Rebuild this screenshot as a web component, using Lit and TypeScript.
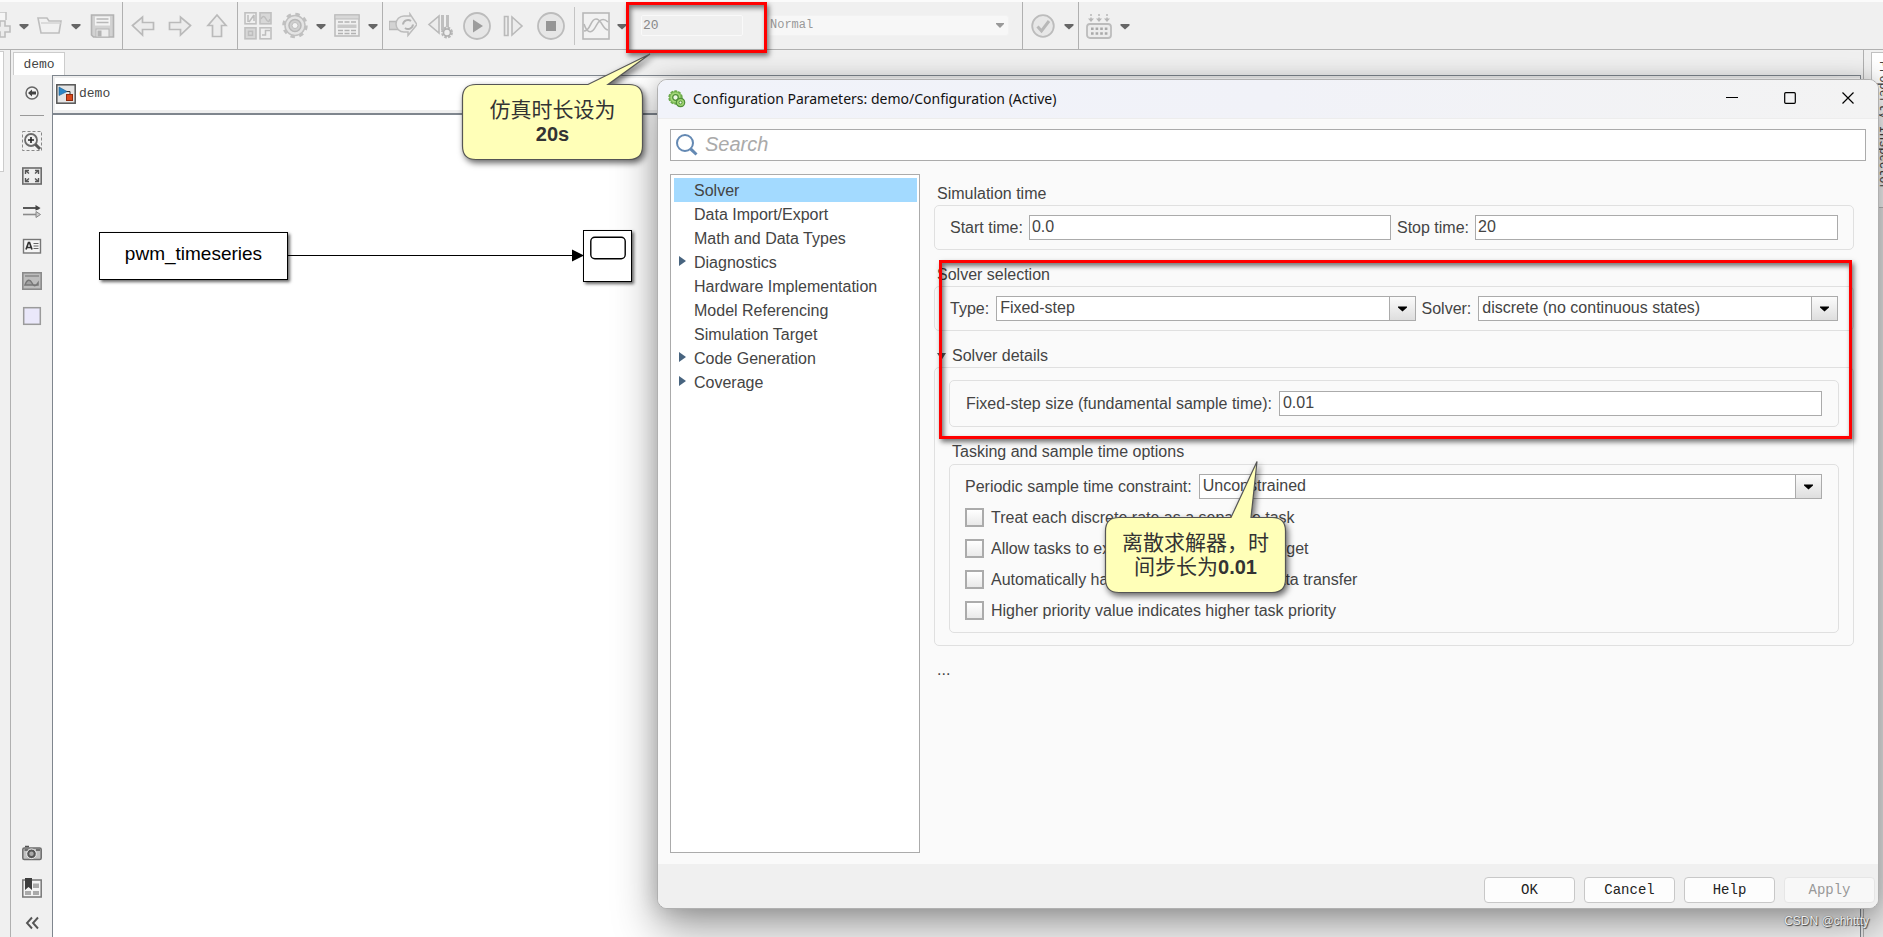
import { LitElement, html, css, svg, nothing } from "lit";
import { customElement, property } from "lit/decorators.js";

type Art = ReturnType<typeof svg>;

const icons: Record<string, Art> = {
  add: svg`<path d="M-8 14V0H6v8" fill="#f6f6f6" stroke="#c4c4c4" stroke-width="1.6"/><path d="M-3 14h5V9h5v5h5v6H7v5H2v-5h-5z" transform="translate(-2 0)" fill="#ececec" stroke="#bdbdbd" stroke-width="1.6"/>`,
  folder: svg`<path d="M2 6h9l2 3h12l-2 12H5z" fill="#f1f1f1" stroke="#bebebe" stroke-width="1.6"/><path d="M5 11h20" stroke="#d2d2d2" stroke-width="1.4"/>`,
  save: svg`<path d="M3.500 3h22v22h-20l-2-2z" fill="#d2d2d2" stroke="#b2b2b2" stroke-width="1.6"/><rect x="7" y="4.500" width="15" height="9" fill="#f3f3f3"/><path d="M8.500 7h12M8.500 10.500h12" stroke="#b8b8b8" stroke-width="1.3"/><rect x="8" y="17" width="13" height="8" fill="#ededed" stroke="#b5b5b5"/><rect x="9.500" y="18.500" width="4" height="6" fill="#b4b4b4"/>`,
  back: svg`<path d="M3.500 13.500L13.500 5v5.500h11v7h-11V23z" fill="#ececec" stroke="#bababa" stroke-width="1.7"/>`,
  forward: svg`<path d="M24.500 13.500L14.500 5v5.500h-11v7h11V23z" fill="#ececec" stroke="#bababa" stroke-width="1.7"/>`,
  up: svg`<path d="M14 3L5 13.500h4.500V24.500h9V13.500H23z" fill="#ececec" stroke="#bababa" stroke-width="1.7"/>`,
  library: svg`<g fill="#efefef" stroke="#c0c0c0" stroke-width="1.6"><rect x="1" y=".8" width="11" height="11"/><rect x="16" y=".8" width="11" height="11" fill="#d7d7d7"/><rect x="1" y="15.800" width="11" height="11" fill="#d7d7d7"/><rect x="16" y="15.800" width="11" height="11"/></g><g fill="none" stroke="#bdbdbd" stroke-width="1.5"><path d="M4 10V3M5 10l5-7M10 9V3M17 7q2.500-5 5 0t4 0M18 23h3.500v-4.500H26"/><rect x="4.500" y="19.300" width="4" height="4"/></g>`,
  gear: svg`<circle cx="14" cy="13.500" r="11" fill="none" stroke="#c0c0c0" stroke-width="3.500" stroke-dasharray="4.320 4.320"/><circle cx="14" cy="13.500" r="10" fill="#e4e4e4" stroke="#c0c0c0" stroke-width="1.5"/><circle cx="14" cy="13.500" r="6" fill="#d0d0d0" stroke="#b8b8b8" stroke-width="1.5"/><circle cx="14" cy="13.500" r="3" fill="#f3f3f3" stroke="#bdbdbd"/>`,
  table: svg`<rect x="2" y="3" width="24" height="21" fill="#f0f0f0" stroke="#bdbdbd" stroke-width="1.6"/><rect x="2" y="3" width="24" height="4" fill="#d8d8d8" stroke="#bdbdbd"/><rect x="4.500" y="12.500" width="19" height="3.500" fill="#c9c9c9"/><path d="M5 10h18M5 18.500h18M5 21.500h18" stroke="#b2b2b2" stroke-width="1.4" stroke-dasharray="5 1.500"/>`,
  update: svg`<path d="M0 9.500h10v8H0z" fill="#d3d3d3" stroke="#b8b8b8" stroke-width="1.5"/><path d="M15 4h6V2l7 10.500-9 11V20h-4a8 8 0 0 1 0-16z" fill="#ebebeb" stroke="#bcbcbc" stroke-width="1.5"/><path d="M14 12.500a5 5 0 0 1 8-3.500M24 12.500a5 5 0 0 1-8 3.500" fill="none" stroke="#b2b2b2" stroke-width="2"/>`,
  stepback: svg`<path d="M13 4v17L3 12.500z" fill="#ececec" stroke="#bababa" stroke-width="1.6"/><path d="M16.500 3v15M21.500 3v12" stroke="#bfbfbf" stroke-width="3"/><circle cx="21" cy="20.500" r="4.800" fill="none" stroke="#b8b8b8" stroke-width="2.400" stroke-dasharray="2.500 1.270"/><circle cx="21" cy="20.500" r="3.500" fill="#eee" stroke="#b0b0b0" stroke-width="1.6"/>`,
  play: svg`<circle cx="14" cy="14" r="13" fill="#e6e6e6" stroke="#bcbcbc" stroke-width="1.8"/><path d="M10 7.500v13L20 14z" fill="#9c9c9c"/>`,
  stepfwd: svg`<path d="M4.500 4.500h3.500v19H4.500zM12 5v18l10-9z" fill="#ececec" stroke="#bababa" stroke-width="1.6"/>`,
  stop: svg`<circle cx="14" cy="14" r="13" fill="#e6e6e6" stroke="#bcbcbc" stroke-width="1.8"/><rect x="9" y="9" width="10" height="10" fill="#969696"/>`,
  scope: svg`<rect x="1" y="1" width="26" height="26" fill="#f2f2f2" stroke="#b8b8b8" stroke-width="1.6"/><path d="M2 19c7 0 6-12 12-12s6 10 12 11M2 12c4 12 9 8 12 2s7-9 12-4" fill="none" stroke="#b8b8b8" stroke-width="1.6"/>`,
  check: svg`<circle cx="14" cy="14" r="10.800" fill="#e7e7e7" stroke="#bcbcbc" stroke-width="1.8"/><path d="M8.500 14.500l4 4.500L20 9" fill="none" stroke="#b8b8b8" stroke-width="3"/>`,
  build: svg`<path d="M6 2v6M14 2v6M22 2v6" stroke="#bcbcbc" stroke-width="1.6" stroke-dasharray="2 1.500"/><path d="M3 6.500h6L6 10zM11 6.500h6L14 10zM19 6.500h6L22 10z" fill="#b6b6b6"/><rect x="2" y="12" width="24" height="14" rx="3" fill="#ececec" stroke="#bcbcbc" stroke-width="1.8"/><path d="M6 16.800h17M6 21.500h17" stroke="#a9a9a9" stroke-width="2.400" stroke-dasharray="2.600 2"/>`,
  hide: svg`<circle cx="10" cy="10" r="6" fill="#f5f5f5" stroke="#666" stroke-width="1.5"/><path d="M6 10l4-3.500v2h4v3h-4v2z" fill="#444"/>`,
  zoom: svg`<rect x=".5" y=".5" width="19" height="19" fill="none" stroke="#888" stroke-dasharray="3 2"/><circle cx="9" cy="9" r="6" fill="#efefef" stroke="#6b6b6b" stroke-width="1.8"/><path d="M6 9h6M9 6v6" stroke="#222" stroke-width="1.6"/><path d="M13.500 13.500l4.500 4.500" stroke="#555" stroke-width="3"/>`,
  fit: svg`<rect x=".8" y="2" width="18.400" height="16" fill="#eee" stroke="#6c6c6c" stroke-width="1.6"/><path d="M3.500 8V4.500H7M13 4.500h3.500V8M16.500 12v3.500H13M7 15.500H3.500V12M3.500 4.500L7 7.500M16.500 4.500L13 7.500M16.500 15.500L13 12.500M3.500 15.500l3.500-3" fill="none" stroke="#555" stroke-width="1.4"/>`,
  signals: svg`<path d="M1 7h13" stroke="#333" stroke-width="1.6"/><path d="M13.500 4l5 3-2 1.500-3 1z" fill="#444"/><path d="M1 13.500h13" stroke="#8a8a8a" stroke-width="1.6"/><path d="M14 10.500l4.500 3-4.500 3z" fill="#ccc" stroke="#888"/>`,
  annotation: svg`<rect x="1.500" y="3.500" width="17" height="13.500" fill="#f5f5f5" stroke="#777" stroke-width="1.4"/><path d="M4 13.500L6.500 6.500h1l2.500 7M5 11.500h4" fill="none" stroke="#333" stroke-width="1.7"/><path d="M11.500 7.500h5M11.500 10h5M11.500 12.500h5" stroke="#666" stroke-width="1"/>`,
  image: svg`<rect x=".8" y="1.800" width="18.400" height="16.400" fill="#bdbdbd" stroke="#8b8b8b" stroke-width="1.6"/><path d="M3 5h14" stroke="#8a8a8a" stroke-width="1.500"/><path d="M3 14c2-6 5-6 7-2s4 3 6 0v2H3z" fill="#a2a2a2" stroke="#777" stroke-width="1.5"/>`,
  area: svg`<rect x="1.700" y="1.700" width="16.600" height="16.600" fill="#eae8fa" stroke="#9b9b9b" stroke-width="1.500"/>`,
  camera: svg`<rect x=".8" y="5" width="18.400" height="11.500" rx="1.500" fill="#c2c2c2" stroke="#6c6c6c" stroke-width="1.5"/><path d="M3 3.500h4M2.500 7h4M14 7h4" stroke="#555" stroke-width="1.6"/><circle cx="9.500" cy="10.800" r="4.800" fill="#555" stroke="#eee" stroke-width="1"/><circle cx="9.500" cy="10.800" r="2.200" fill="#aaa"/>`,
  browser: svg`<rect x=".8" y="2" width="18.400" height="17" fill="#f3f3f3" stroke="#777" stroke-width="1.5"/><path d="M3 13h6v4H3zM11 13h6v4h-6zM11 5.500h6v4.500h-6z" fill="#aaa"/><path d="M3 0h7v12L6.500 9 3 12z" fill="#3d3d3d"/>`,
  collapse: svg`<path d="M10 4.500L5 10l5 5.500M16 4.500L11 10l5 5.500" fill="none" stroke="#555" stroke-width="1.9"/>`,
};

const glyph = (name: string, size = 28) =>
  html`<svg width=${size} height=${size} viewBox="0 0 ${size} ${size}" aria-hidden="true">${icons[name]}</svg>`;

@customElement("tool-button")
class ToolButton extends LitElement {
  static styles = css`
    :host { display: block; flex: none; }
    button { display: block; padding: 0; border: 0; background: none; overflow: hidden; }
    .caret { width: 14px; height: 28px; }
    .clipped { width: 12px; }
    svg { display: block; }
  `;
  @property() icon = "";
  @property() label = "";
  render() {
    if (this.icon === "caret")
      return html`<button class="caret" aria-label=${this.label || "More"}>
        <svg width="14" height="28" viewBox="0 0 14 28"><path d="M2.500 12h9v1.500L7 17.500l-4.500-4z" fill="#666"/></svg>
      </button>`;
    return html`<button class=${this.icon === "add" ? "clipped" : ""} aria-label=${this.label}>${glyph(this.icon)}</button>`;
  }
}

@customElement("note-callout")
class NoteCallout extends LitElement {
  static styles = css`
    :host { display: block; width: 181px; height: 76px; position: relative; pointer-events: none; }
    svg { position: absolute; left: 0; top: 0; overflow: visible; filter: drop-shadow(2px 3px 3px rgba(0, 0, 0, 0.6)); }
    .text {
      position: relative; height: 100%; display: flex; flex-direction: column; align-items: center; justify-content: center;
      font-family: "Liberation Sans", "Noto Sans CJK SC", sans-serif; font-size: 21px; line-height: 24px; color: #333;
    }
    .text ::slotted(*) { white-space: nowrap; }
  `;
  @property() tail = "";
  render() {
    return html`<svg width="181" height="76" aria-hidden="true">
        <path d=${this.tail} fill="#ffffb8" stroke="#555" stroke-width="1.2" />
      </svg>
      <div class="text"><slot></slot></div>`;
  }
}

@customElement("combo-box")
class ComboBox extends LitElement {
  static styles = css`
    :host { display: block; min-width: 0; }
    label { display: flex; align-items: center; }
    .name { white-space: nowrap; margin-right: 7px; }
    .box { flex: 1; display: grid; grid-template-columns: 1fr 27px; height: 25px; box-sizing: border-box; min-width: 0; }
    select {
      grid-area: 1 / 1 / 2 / 3; appearance: none; border: 1px solid #ababab; border-radius: 0; background: #fff;
      font: inherit; color: inherit; padding: 0 30px 1px 3px; min-width: 0; height: 25px;
    }
    .drop {
      grid-area: 1 / 2; pointer-events: none; border: 1px solid #ababab;
      background: linear-gradient(#fbfbfb, #dedede); display: grid; place-items: center;
    }
  `;
  @property() label = "";
  @property() value = "";
  render() {
    return html`<label>
      <span class="name">${this.label}</span>
      <span class="box">
        <select><option>${this.value}</option></select>
        <span class="drop"><svg width="9" height="6"><path d="M0 .5h9v1L4.500 5.500 0 1.500z" fill="#000"/></svg></span>
      </span>
    </label>`;
  }
}

@customElement("config-dialog")
class ConfigDialog extends LitElement {
  static styles = css`
    :host {
      display: flex; flex-direction: column; box-sizing: border-box; border: 1px solid #b0b0b0; border-radius: 10px;
      background: #fafafa; color: #444; font-family: "Liberation Sans", Arial, sans-serif; font-size: 16px; line-height: 20px;
      box-shadow: 0 0 20px rgba(0, 0, 0, 0.16), 0 20px 44px rgba(0, 0, 0, 0.38);
    }
    .title {
      display: flex; align-items: center; height: 38px; padding: 0 1px 0 10px; border-radius: 9px 9px 0 0; border-bottom: 1px solid #ededed;
      background: linear-gradient(90deg, #f1f3fa, #f1f2f8 50%, #f3f3f3);
      font-family: "Noto Sans", sans-serif; font-size: 14px; color: #111;
    }
    .title h1 { flex: 1; margin: 0 0 0 7px; font: inherit; }
    .title button { width: 58px; height: 38px; border: 0; padding: 0; background: none; }
    .body { flex: 1; min-height: 0; display: flex; flex-direction: column; gap: 13px; padding: 10px 12px 11px; }
    .search { display: flex; align-items: center; height: 32px; box-sizing: border-box; border: 1px solid #ababab; background: #fff; padding-left: 4px; }
    .search input { flex: 1; border: 0; outline: 0; background: none; font: italic 20px/26px "Liberation Sans", sans-serif; padding: 0 0 2px 6px; }
    .search input::placeholder { color: #aaa; opacity: 1; }
    .panes { flex: 1; min-height: 0; display: flex; gap: 14px; }
    .tree { width: 250px; box-sizing: border-box; border: 1px solid #ababab; background: #fff; margin: 0; padding: 3px 2px 0 3px; list-style: none; }
    .tree button {
      display: flex; align-items: center; width: 100%; height: 24px; border: 0; padding: 2px 0 0; background: none;
      font: inherit; color: inherit; text-align: left;
    }
    .tree .selected { background: #a3daff; }
    .tree .mark { width: 20px; box-sizing: border-box; display: grid; place-items: center start; }
    .tree .mark svg { margin-left: 5px; margin-bottom: 4px; }
    .form { flex: 1; min-width: 0; padding: 10px 12px 0 0; }
    h2 { margin: 0 0 1px 3px; font: inherit; }
    .group { border: 1px solid #e0e0e0; border-radius: 5px; box-sizing: border-box; }
    .row { display: flex; gap: 6px; padding: 9px 15px; }
    .row > * { flex: 1; }
    .combos { display: grid; grid-template-columns: 19fr 17fr; }
    .field { display: flex; align-items: center; white-space: nowrap; min-width: 0; }
    .field input {
      flex: 1; min-width: 0; margin-left: 6px; height: 25px; box-sizing: border-box; border: 1px solid #ababab;
      background: #fff; font: inherit; color: inherit; padding: 0 2px 1px;
    }
    .details > h2 { display: flex; align-items: center; }
    .details > h2 svg { margin-right: 6px; }
    .selection, .simulation { margin-bottom: 15px; }
    .solver { position: relative; }
    .outer { padding: 12px 14px; }
    .outer .row { padding: 10px 16px; }
    .outer .field input { margin-left: 7px; padding-left: 3px; }
    .tasking { padding: 9px 16px 12px 15px; }
    .tasking-title { margin: 15px 0 2px 3px; }
    .checks { display: grid; gap: 12px; margin-top: 9px; }
    .check { display: flex; align-items: center; height: 19px; }
    .check input {
      appearance: none; width: 19px; height: 19px; margin: 0 7px 0 0; border: 2px solid #ababab; background: linear-gradient(#fff, #e9e9e9);
    }
    .more { margin: 14px 0 0 3px; }
    .frame {
      position: absolute; left: 5px; right: 2px; top: -5px; height: 179px; box-sizing: border-box; border: 3px solid #f00;
      pointer-events: none; box-shadow: 2px 3px 5px rgba(0, 0, 0, 0.55), inset 2px 3px 5px rgba(0, 0, 0, 0.55);
    }
    .note { position: absolute; left: 171px; top: 252px; }
    .note b { font-size: 20px; }
    .footer { display: flex; justify-content: flex-end; align-items: flex-start; gap: 9px; height: 44px; box-sizing: border-box; padding: 13px 3px 0; background: #f0f0f0; border-radius: 0 0 9px 9px; }
    .footer button {
      width: 91px; height: 26px; border: 1px solid #c8c8c8; border-radius: 4px; background: #fdfdfd; padding: 0;
      font: 14px/20px "Liberation Mono", monospace; color: #222;
    }
    .footer button:disabled { color: #999; border-color: #e6e6e6; background: #f8f8f8; }
  `;

  private sections = [
    { name: "Solver" },
    { name: "Data Import/Export" },
    { name: "Math and Data Types" },
    { name: "Diagnostics", children: true },
    { name: "Hardware Implementation" },
    { name: "Model Referencing" },
    { name: "Simulation Target" },
    { name: "Code Generation", children: true },
    { name: "Coverage", children: true },
  ];

  private options = [
    "Treat each discrete rate as a separate task",
    "Allow tasks to execute concurrently on target",
    "Automatically handle rate transition for data transfer",
    "Higher priority value indicates higher task priority",
  ];

  render() {
    return html`
      <header class="title">
        <svg width="18" height="18" viewBox="0 0 18 18" aria-hidden="true">
          <circle cx="7.500" cy="7.500" r="6.400" fill="#a9d97a" stroke="#6aa84a" stroke-width="1.600" stroke-dasharray="2.900 1.120"/>
          <circle cx="7.500" cy="7.500" r="5.600" fill="#a5d87a" stroke="#6fb04e"/>
          <circle cx="7.500" cy="7.500" r="2.800" fill="#eef8e6" stroke="#4f8f38" stroke-width="1.300"/>
          <circle cx="12.500" cy="12.500" r="4.200" fill="#9fd472" stroke="#4f8f38" stroke-width="1.200"/>
          <circle cx="12.500" cy="12.500" r="1.500" fill="#f3faee" stroke="#4f8f38"/>
        </svg>
        <h1>Configuration Parameters: demo/Configuration (Active)</h1>
        <button aria-label="Minimize"><svg width="12" height="12"><path d="M0 5.500h12" stroke="#000"/></svg></button>
        <button aria-label="Maximize"><svg width="12" height="12"><rect x=".7" y=".7" width="10.600" height="10.600" rx="1" fill="none" stroke="#000" stroke-width="1.200"/></svg></button>
        <button aria-label="Close"><svg width="12" height="12"><path d="M.5.500l11 11M11.500.500l-11 11" stroke="#000" stroke-width="1.200"/></svg></button>
      </header>
      <div class="body">
        <label class="search">
          <svg width="24" height="24" viewBox="0 0 24 24" aria-hidden="true"><circle cx="10" cy="10" r="8" fill="none" stroke="#6489b3" stroke-width="2"/><path d="M15 16l2-1 5.500 5.500-2 2L15 17.500z" fill="#6489b3"/></svg>
          <input type="text" placeholder="Search" aria-label="Search" />
        </label>
        <div class="panes">
          <ul class="tree">
            ${this.sections.map(
              (s, i) => html`<li><button class=${i === 0 ? "selected" : ""}>
                <span class="mark">${s.children ? html`<svg width="7" height="10"><path d="M0 0l7 5-7 5z" fill="#48647f"/></svg>` : nothing}</span>${s.name}
              </button></li>`
            )}
          </ul>
          <div class="form">
            <section class="simulation">
              <h2>Simulation time</h2>
              <div class="group row">
                <label class="field">Start time:<input type="text" value="0.0" /></label>
                <label class="field">Stop time:<input type="text" value="20" /></label>
              </div>
            </section>
            <div class="solver">
              <section class="selection">
                <h2>Solver selection</h2>
                <div class="group row combos">
                  <combo-box label="Type:" value="Fixed-step"></combo-box>
                  <combo-box label="Solver:" value="discrete (no continuous states)"></combo-box>
                </div>
              </section>
              <section class="details">
                <h2><svg width="9" height="8"><path d="M0 1h9L4.500 8z" fill="#555"/></svg>Solver details</h2>
                <div class="group outer">
                  <div class="group row">
                    <label class="field">Fixed-step size (fundamental sample time):<input type="text" value="0.01" /></label>
                  </div>
                  <h2 class="tasking-title">Tasking and sample time options</h2>
                  <div class="group tasking">
                    <combo-box label="Periodic sample time constraint:" value="Unconstrained"></combo-box>
                    <div class="checks">
                      ${this.options.map((o) => html`<label class="check"><input type="checkbox" />${o}</label>`)}
                    </div>
                  </div>
                </div>
              </section>
              <div class="frame"></div>
              <note-callout
                class="note"
                tail="M14 .5H126L152-55.500 146 .500H167Q180.500.500 180.500 14V62Q180.500 75.500 167 75.500H14Q.5 75.500.5 62V14Q.5.500 14 .500Z"
                ><span>离散求解器，时</span><span>间步长为<b>0.01</b></span></note-callout>
            </div>
            <p class="more">...</p>
          </div>
        </div>
      </div>
      <footer class="footer">
        <button>OK</button><button>Cancel</button><button>Help</button><button disabled>Apply</button>
      </footer>
    `;
  }
}

@customElement("app-root")
class AppRoot extends LitElement {
  static styles = css`
    :host {
      display: flex; flex-direction: column; position: relative; height: 100vh; overflow: hidden; background: #f0f0f0;
      font: 13px/20px "Liberation Mono", monospace; color: #444;
    }
    .toolbar {
      position: relative; z-index: 2; display: flex; height: 50px; box-sizing: border-box; flex: none;
      border-top: 2px solid #fbfbfb; border-bottom: 1px solid #b0b0b0;
    }
    .tools { display: flex; align-items: center; gap: 9px; padding: 0 6px; border-right: 1px solid #b0b0b0; }
    .tools.tight { gap: 5px; }
    .tools.first { padding-left: 0; }
    .tools.view, .tools.state { padding-right: 2px; }
    .tools.last { border: 0; }
    .apart { margin-right: 4px; }
    .tools.run { gap: 9px; padding-right: 13px; }
    .trace { display: flex; align-items: center; gap: 5px; border-left: 1px solid #c4c4c4; height: 38px; padding-left: 7px; }
    .inputs { display: flex; align-items: center; margin-left: -12px; }
    .duration { position: relative; padding: 0 24px 0 15px; }
    .duration input {
      width: 102px; height: 21px; box-sizing: border-box; display: block; border: 1px solid #f9f9f9; border-radius: 2px; background: #efefef;
      font: 13px/19px "Liberation Mono", monospace; color: #888; padding: 0 0 0 1px;
    }
    .highlight {
      position: absolute; left: 0; right: 0; top: -13px; height: 51px; box-sizing: border-box; border: 3px solid #f00; z-index: 3;
      pointer-events: none; box-shadow: 2px 3px 5px rgba(0, 0, 0, 0.5), inset 2px 3px 5px rgba(0, 0, 0, 0.5);
    }
    .mode { display: grid; width: 242px; height: 21px; }
    .mode select {
      grid-area: 1 / 1; appearance: none; border: 1px solid #f2f2f2; border-radius: 3px; background: #f7f7f7; color: #999;
      font: 12px/19px "Liberation Mono", monospace; padding: 0 0 0 2px; opacity: 1;
    }
    .mode svg { grid-area: 1 / 1; place-self: center end; margin-right: 5px; pointer-events: none; }
    .workspace { flex: 1; min-height: 0; display: flex; }
    .explorer { width: 10px; border-right: 1px solid #b0b0b0; }
    .explorer div { width: 3px; height: 119px; margin-top: 1px; background: #fff; border: solid #ccc; border-width: 1px 1px 1px 0; }
    .editor { flex: 1; min-width: 0; display: flex; flex-direction: column; border-right: 1px solid #b0b0b0; padding-right: 2px; }
    .tabs { display: flex; height: 25px; padding: 2px 0 0 2px; box-sizing: border-box; }
    .tabs button { width: 52px; border: 1px solid #ccc; border-bottom: 0; background: #fff; padding: 1px 0 0; font: inherit; color: inherit; }
    .model { flex: 1; min-height: 0; display: flex; }
    .palette { width: 41px; display: flex; flex-direction: column; align-items: center; }
    .palette button { width: 35px; height: 35px; flex: none; padding: 0; border: 0; background: none; display: grid; place-items: center; }
    .palette hr { width: 24px; margin: 5px 0 7px; border: 0; border-top: 1px solid #999; flex: none; }
    .spacer { flex: 1; }
    .bottom { margin-bottom: -3px; }
    .sheet { flex: 1; min-width: 0; display: flex; flex-direction: column; border: solid #7f868e; border-width: 1px 1px 0; background: #fff; }
    .crumbs {
      display: flex; align-items: center; gap: 3px; height: 37px; box-sizing: border-box; border: solid #efefef;
      border-width: 2px 0 3px 2px; padding-left: 1px; box-shadow: 0 2px #7f868e;
    }
    .canvas { position: relative; flex: 1; margin-top: 2px; }
    .block {
      position: absolute; box-sizing: border-box; border: 1px solid #000; background: #fff; box-shadow: 2px 2px 3px rgba(0, 0, 0, 0.6);
      display: grid; place-items: center; color: #000; font: 19px/22px "Liberation Sans", sans-serif;
    }
    .source { left: 46px; top: 117px; width: 189px; height: 48px; padding-bottom: 5px; }
    .sink { left: 530px; top: 115px; width: 49px; height: 52px; place-items: start center; padding-top: 5px; }
    .wire { position: absolute; left: 235px; top: 134px; }
    .side { width: 19px; box-sizing: border-box; padding: 2px 0 0 7px; overflow: hidden; flex: none; }
    .side button {
      display: block; writing-mode: vertical-rl; width: 24px; height: 156px; border: 1px solid #c0c0c0; background: #fff; padding: 8px 0 0;
      font: 12px/22px "Liberation Mono", monospace; color: #444; text-align: left; white-space: nowrap;
    }
    .dialog { position: absolute; left: 657px; right: 4px; top: 79px; bottom: 28px; }
    .note { position: absolute; left: -164px; top: 69px; z-index: 4; }
    .note b { font-size: 20px; }
    .credit {
      position: absolute; right: 14px; bottom: 6px; margin: 0; font: 12px/20px "Liberation Sans", sans-serif; color: #eee;
      text-shadow: 1px 1px 1px #444, 0 0 1px #555;
    }
  `;

  private paletteTop = ["zoom", "fit", "signals", "annotation", "image", "area"];

  render() {
    const tool = (icon: string, label = icon, cls = "") =>
      html`<tool-button class=${cls} icon=${icon} label=${label}></tool-button>`;
    const caret = html`<tool-button icon="caret"></tool-button>`;
    const side = (name: string) => html`<button aria-label=${name}>${glyph(name, 20)}</button>`;
    return html`
      <config-dialog class="dialog" role="dialog"></config-dialog>
      <nav class="toolbar">
        <div class="tools tight first">${tool("add", "New")}${caret}${tool("folder", "Open")}${caret}${tool("save", "Save")}</div>
        <div class="tools">${tool("back")}${tool("forward")}${tool("up")}</div>
        <div class="tools tight view">${tool("library", "Library", "apart")}${tool("gear", "Settings")}${caret}${tool("table", "Explorer")}${caret}</div>
        <div class="tools run">
          ${tool("update")}${tool("stepback")}${tool("play")}${tool("stepfwd")}${tool("stop")}
          <div class="trace">${tool("scope")}${caret}</div>
          <div class="inputs">
            <div class="duration">
              <input type="text" value="20" aria-label="Simulation stop time" />
              <div class="highlight"></div>
              <note-callout
                class="note"
                tail="M14 .5H126L188-30 146 .500H167Q180.500.500 180.500 14V62Q180.500 75.500 167 75.500H14Q.5 75.500.5 62V14Q.5.500 14 .500Z"
                ><span>仿真时长设为</span><b>20s</b></note-callout>
            </div>
            <div class="mode">
              <select aria-label="Simulation mode"><option>Normal</option></select>
              <svg width="8" height="5"><path d="M0 0h8v1L4 5 0 1z" fill="#999"/></svg>
            </div>
          </div>
        </div>
        <div class="tools tight state">${tool("check", "Diagnostics")}${caret}</div>
        <div class="tools tight last">${tool("build", "Build")}${caret}</div>
      </nav>
      <div class="workspace">
        <div class="explorer"><div></div></div>
        <main class="editor">
          <div class="tabs"><button>demo</button></div>
          <div class="model">
            <div class="palette">
              ${side("hide")}
              <hr />
              ${this.paletteTop.map(side)}
              <div class="spacer"></div>
              ${side("camera")}${side("browser")}
              <div class="bottom">${side("collapse")}</div>
            </div>
            <div class="sheet">
              <div class="crumbs">
                <svg width="20" height="20" viewBox="0 0 20 20" aria-hidden="true">
                  <rect x=".8" y=".8" width="18.400" height="18.400" fill="#e5e5e5" stroke="#555" stroke-width="1.500"/>
                  <path d="M10 7.500h4V11" fill="none" stroke="#333"/>
                  <path d="M3 3l8 4.500-8 4z" fill="#2b86c5" stroke="#175a8f" stroke-width=".6"/>
                  <rect x="10.500" y="10.500" width="6" height="6" fill="#d8491c" stroke="#8f2a0c"/>
                </svg>
                <span>demo</span>
              </div>
              <div class="canvas">
                <div class="block source">pwm_timeseries</div>
                <svg class="wire" width="296" height="14" aria-hidden="true"><path d="M0 6.500h290" stroke="#000"/><path d="M284 .500v12l12-6z" fill="#000"/></svg>
                <div class="block sink"><svg width="36" height="24"><rect x=".8" y="1.200" width="34.400" height="21.600" rx="4" fill="#fff" stroke="#000" stroke-width="1.400"/></svg></div>
              </div>
            </div>
          </div>
        </main>
        <aside class="side"><button>Property Inspector</button></aside>
      </div>
      <p class="credit">CSDN @chhttty</p>
    `;
  }
}
